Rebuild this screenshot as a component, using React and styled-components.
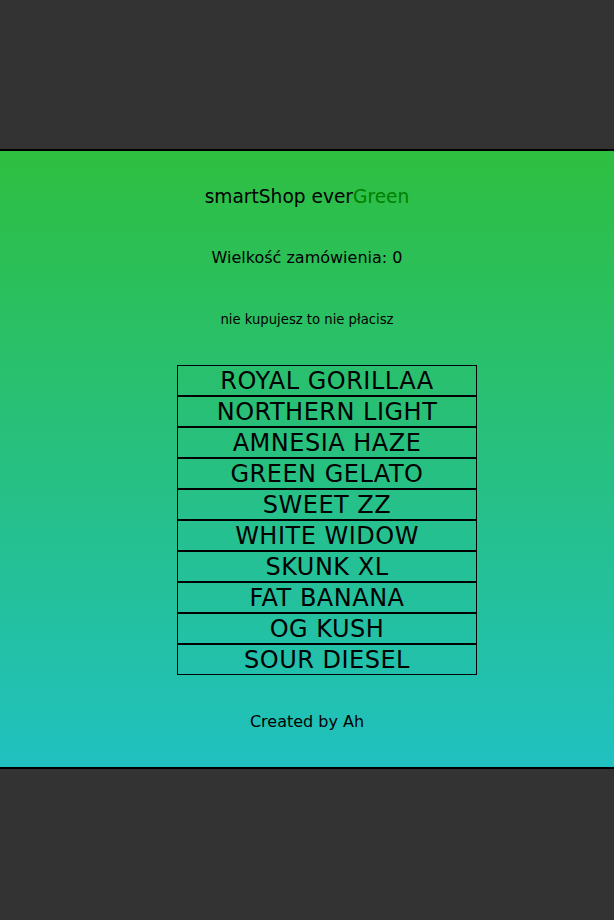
import React from "react";
import styled, { createGlobalStyle } from "styled-components";

const GlobalStyle = createGlobalStyle`
  html, body {
    margin: 0;
    padding: 0;
    background-color: #333333;
  }
  body {
    font-family: "DejaVu Sans", "Noto Sans", sans-serif;
    color: #000;
  }
`;

const Page = styled.div`
  display: flex;
  flex-direction: column;
  min-height: 920px;
  padding-top: 149px;
  box-sizing: border-box;
`;

const Shop = styled.main`
  display: flex;
  flex-direction: column;
  align-items: center;
  background: linear-gradient(to bottom, #2ebf40, #20c1c0);
  border-top: 2px solid #000;
  border-bottom: 2px solid #000;
  padding: 35px 0 35px;
`;

const Title = styled.h1`
  margin: 0;
  font-size: 18.6px;
  font-weight: 400;
  line-height: 22px;
`;

const Green = styled.span`
  color: #008000;
`;

const Counter = styled.p`
  margin: 40px 0 0;
  font-size: 16px;
  line-height: 20px;
`;

const Motto = styled.p`
  margin: 44px 0 0;
  font-size: 13.2px;
  line-height: 16px;
`;

const Strains = styled.ul`
  list-style: none;
  margin: 37px 0 0;
  padding: 0 0 0 40px;
`;

const Strain = styled.li`
  box-sizing: border-box;
  width: 300px;
  height: 31px;
  border: 1px solid #000;
  font-size: 24px;
  letter-spacing: 0.5px;
  line-height: 31px;
  text-align: center;
  cursor: pointer;
`;

const Footer = styled.footer`
  margin-top: 37px;
  font-size: 16px;
  line-height: 20px;
`;

const strains = [
  "ROYAL GORILLAA",
  "NORTHERN LIGHT",
  "AMNESIA HAZE",
  "GREEN GELATO",
  "SWEET ZZ",
  "WHITE WIDOW",
  "SKUNK XL",
  "FAT BANANA",
  "OG KUSH",
  "SOUR DIESEL",
];

const App = () => {
  return (
    <Page>
      <GlobalStyle />
      <Shop>
        <Title>
          smartShop ever<Green>Green</Green>
        </Title>
        <Counter>Wielkość zamówienia: 0</Counter>
        <Motto>nie kupujesz to nie płacisz</Motto>
        <Strains>
          {strains.map((name) => (
            <Strain key={name}>{name}</Strain>
          ))}
        </Strains>
        <Footer>Created by Ah</Footer>
      </Shop>
    </Page>
  );
};

export default App;
